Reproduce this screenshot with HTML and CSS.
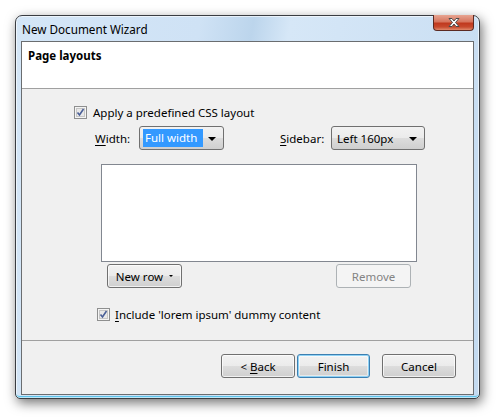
FILE: index.html
```html
<!DOCTYPE html>
<html>
<head>
<meta charset="utf-8">
<link rel="stylesheet" href="styles.css">
</head>
<body>
<div class="window">
  <div class="titlebar">
    <span class="title">New Document Wizard</span>
    <div class="close">
      <svg width="16" height="11" viewBox="0 0 16 11"><path d="M3 1.5h3l2 2.5 2-2.5h3l-3.5 4 3.5 4h-3l-2-2.5-2 2.5h-3l3.5-4z" fill="#fff" stroke="#4a4a4a" stroke-width="1"/></svg>
    </div>
  </div>
  <div class="client">
    <div class="header"><span class="htitle">Page layouts</span></div>
    <div class="content">
      <div class="row check1">
        <span class="cb"><svg width="13" height="13" viewBox="0 0 13 13"><rect x="0.5" y="0.5" width="12" height="12" fill="#f4f4f4" stroke="#8e8f8f"/><rect x="2.5" y="2.5" width="8" height="8" fill="#e8e8e8" stroke="#c6c6c6"/><path d="M3.5 6.5l2 2.5 4-6" fill="none" stroke="#4a5f97" stroke-width="1.6"/></svg></span>
        <span class="lbl">Apply a predefined CSS layout</span>
      </div>
      <div class="row selects">
        <span class="flbl"><u>W</u>idth:</span>
        <div class="combo w1"><span class="sel">Full width</span><span class="arrow"></span></div>
        <span class="flbl sb"><u>S</u>idebar:</span>
        <div class="combo w2"><span class="val">Left 160px</span><span class="arrow"></span></div>
      </div>
      <div class="listbox"></div>
      <div class="row btnrow">
        <button class="btn newrow"><span>New row</span><span class="sarrow"></span></button>
        <button class="btn remove" disabled><span>Remove</span></button>
      </div>
      <div class="row check2">
        <span class="cb"><svg width="13" height="13" viewBox="0 0 13 13"><rect x="0.5" y="0.5" width="12" height="12" fill="#f4f4f4" stroke="#8e8f8f"/><rect x="2.5" y="2.5" width="8" height="8" fill="#e8e8e8" stroke="#c6c6c6"/><path d="M3.5 6.5l2 2.5 4-6" fill="none" stroke="#4a5f97" stroke-width="1.6"/></svg></span>
        <span class="lbl"><u>I</u>nclude 'lorem ipsum' dummy content</span>
      </div>
    </div>
    <div class="footer">
      <button class="btn back"><span>&lt; <u>B</u>ack</span></button>
      <button class="btn finish"><span>Finish</span></button>
      <button class="btn cancel"><span>Cancel</span></button>
    </div>
  </div>
</div>
</body>
</html>
```
FILE: styles.css
```css
html, body {
  margin: 0;
  padding: 0;
  background: #ffffff;
}
body {
  width: 499px;
  height: 418px;
  overflow: hidden;
  font-family: "Noto Sans", "Open Sans", sans-serif;
  font-size: 11.5px;
  color: #000;
}
.window {
  position: relative;
  margin: 15px 0 0 15px;
  width: 463px;
  height: 382px;
  border: 1px solid #3a3d42;
  border-radius: 7px 7px 5px 5px;
  background: linear-gradient(100deg, #d4e6f7 0%, #cfe2f5 35%, #bcd5ec 45%, #d6e7f7 52%, #cde1f4 80%, #c3daf0 100%);
  box-shadow: 2px 4px 12px rgba(0,0,0,0.55), inset 0 0 0 1px rgba(255,255,255,0.6), inset 0 -2px 0 #5ec3ea;
  display: flex;
  flex-direction: column;
}
.titlebar {
  height: 25px;
  display: flex;
  align-items: center;
  padding-left: 6px;
}
.title {
  font-size: 11.7px;
  color: #000;
  margin-top: 1px;
}
.close {
  position: absolute;
  top: -1px;
  right: 5px;
  width: 41px;
  height: 16px;
  box-sizing: border-box;
  border: 1px solid #5b2a22;
  border-top: none;
  border-radius: 0 0 4px 4px;
  background: linear-gradient(#e7a592 0%, #d6755e 45%, #c0391e 55%, #c74a2e 80%, #e08a6c 100%);
  display: flex;
  align-items: center;
  justify-content: center;
}
.client {
  margin: 0 5px 0 5px;
  height: 352px;
  border: 1px solid #6a6d70;
  background: #f0f0f0;
  display: flex;
  flex-direction: column;
}
.header {
  background: #fff;
  border-bottom: 1px solid #a0a0a0;
  padding: 6px 0 0 6px;
  box-sizing: border-box;
  height: 47px;
}
.htitle {
  font-weight: bold;
  font-size: 11.5px;
}
.content {
  height: 252px;
  box-sizing: border-box;
  border-bottom: 1px solid #a0a0a0;
  display: flex;
  flex-direction: column;
  align-items: flex-start;
}
.row {
  display: flex;
  align-items: center;
}
.cb {
  width: 13px;
  height: 13px;
  display: flex;
}
.check1 {
  margin: 17px 0 0 52px;
  height: 13px;
}
.check1 .lbl { margin-left: 6px; }
.selects {
  margin: 7px 0 0 73px;
  height: 24px;
}
.flbl { width: 44px; }
.sb { margin-left: 56px; width: 51px; }
.combo {
  height: 24px;
  box-sizing: border-box;
  border: 1px solid #707070;
  border-radius: 3px;
  background: linear-gradient(#f2f2f2 0%, #ebebeb 50%, #dddddd 50%, #cfcfcf 100%);
  display: flex;
  align-items: center;
  padding-left: 3px;
  position: relative;
}
.w1 { width: 85px; }
.w2 { width: 94px; }
.sel {
  background: #3399ff;
  color: #fff;
  height: 18px;
  line-height: 18px;
  width: 60px;
  padding-left: 2px;
  box-sizing: border-box;
}
.val { padding-left: 2px; }
.arrow {
  position: absolute;
  right: 7px;
  top: 10px;
  width: 0;
  height: 0;
  border-left: 4px solid transparent;
  border-right: 4px solid transparent;
  border-top: 4px solid #000;
}
.listbox {
  margin: 14px 0 0 79px;
  width: 316px;
  height: 98px;
  box-sizing: border-box;
  border: 1px solid #828790;
  background: #fff;
}
.btnrow {
  margin: 2px 0 0 85px;
  width: 304px;
  justify-content: space-between;
}
.btn {
  font-family: inherit;
  font-size: 11.5px;
  height: 24px;
  box-sizing: border-box;
  border: 1px solid #707070;
  border-radius: 3px;
  background: linear-gradient(#f2f2f2 0%, #ebebeb 50%, #dddddd 50%, #cfcfcf 100%);
  box-shadow: inset 0 0 0 1px rgba(255,255,255,0.7);
  color: #000;
  padding: 0;
  margin: 0;
  display: flex;
  align-items: center;
  justify-content: center;
}
.newrow { width: 75px; }
.sarrow {
  display: inline-block;
  width: 0; height: 0;
  margin-left: 6px;
  border-left: 2px solid transparent;
  border-right: 2px solid transparent;
  border-top: 2px solid #000;
}
.remove {
  width: 75px;
  border-color: #adb2b5;
  background: #f4f4f4;
  color: #838383;
  box-shadow: none;
}
.check2 {
  margin: 20px 0 0 75px;
  height: 13px;
}
.check2 .lbl { margin-left: 5px; }
.footer {
  flex: 1;
  display: flex;
  align-items: flex-start;
  padding: 13px 0 0 199px;
}
.back { width: 74px; }
.finish {
  width: 73px;
  margin-left: 2px;
  border-color: #3c7fb1;
  box-shadow: inset 0 0 0 1px #8fd2f5, inset 0 0 0 2px rgba(255,255,255,0.5);
}
.cancel { width: 74px; margin-left: 12px; }
u { text-decoration: underline; text-underline-offset: 2px; }
```
